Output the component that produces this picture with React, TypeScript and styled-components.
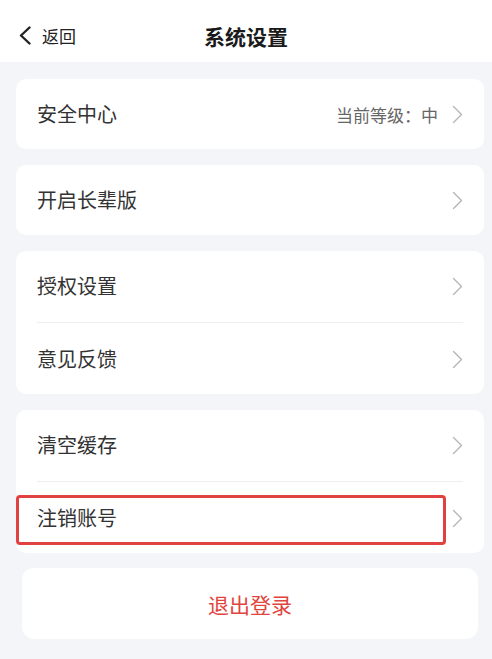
import styled, { createGlobalStyle } from 'styled-components';

const GlobalStyle = createGlobalStyle`
  html, body {
    margin: 0;
    padding: 0;
    background: #f4f5f9;
    font-family: "Noto Sans CJK SC", "Noto Sans", sans-serif;
  }
`;

const Chevron = () => (
  <svg width="11" height="19" viewBox="0 0 11 19" fill="none">
    <path d="M1.5 1.5 L9.5 9.5 L1.5 17.5" stroke="#b3b3b3" strokeWidth="1.3" strokeLinecap="round" strokeLinejoin="round" />
  </svg>
);

const BackIcon = () => (
  <svg width="15" height="19" viewBox="0 0 15 19" fill="none">
    <path d="M11.5 1.5 L3 9.5 L11.5 17.5" stroke="#222" strokeWidth="2.4" strokeLinecap="round" strokeLinejoin="round" />
  </svg>
);

export default function App() {
  return (
    <>
      <GlobalStyle />
      <Page>
        <Header>
          <Back>
            <BackIcon />
            <span>返回</span>
          </Back>
          <Title>系统设置</Title>
        </Header>
        <Content>
          <Card>
            <Row>
              <Label>安全中心</Label>
              <Right>
                <Extra>当前等级：中</Extra>
                <Chevron />
              </Right>
            </Row>
          </Card>
          <Card>
            <Row>
              <Label>开启长辈版</Label>
              <Chevron />
            </Row>
          </Card>
          <Card>
            <Row>
              <Label>授权设置</Label>
              <Chevron />
            </Row>
            <Divider />
            <Row>
              <Label>意见反馈</Label>
              <Chevron />
            </Row>
          </Card>
          <Card>
            <Row>
              <Label>清空缓存</Label>
              <Chevron />
            </Row>
            <Divider />
            <Row>
              <Label>注销账号</Label>
              <Chevron />
              <Highlight />
            </Row>
          </Card>
          <LogoutButton>退出登录</LogoutButton>
        </Content>
      </Page>
    </>
  );
}

const Page = styled.div`
  min-height: 659px;
  background: #f4f5f9;
`;

const Header = styled.div`
  height: 62px;
  background: #fff;
  position: relative;
  display: flex;
  align-items: center;
  justify-content: center;
`;

const Back = styled.div`
  position: absolute;
  left: 18px;
  top: 26px;
  display: flex;
  align-items: center;
  gap: 9px;
  font-size: 17px;
  color: #222;
  line-height: 19px;
`;

const Title = styled.div`
  font-size: 21px;
  font-weight: 700;
  color: #1a1a1a;
  margin-top: 10px;
`;

const Content = styled.div`
  padding: 17px 8px 20px 16px;
  display: flex;
  flex-direction: column;
  gap: 16px;
`;

const Card = styled.div`
  background: #fff;
  border-radius: 10px;
  padding: 0 21px;
`;

const Row = styled.div`
  position: relative;
  height: 70px;
  display: flex;
  align-items: center;
  justify-content: space-between;
`;

const Label = styled.span`
  font-size: 20px;
  color: #333;
  margin-top: -2px;
`;

const Right = styled.div`
  display: flex;
  align-items: center;
  gap: 14px;
`;

const Extra = styled.span`
  font-size: 17px;
  color: #666;
`;

const Divider = styled.div`
  height: 1px;
  margin: 1px 0;
  background: #eeeeee;
`;

const Highlight = styled.div`
  position: absolute;
  left: -21px;
  top: 12px;
  width: 430px;
  height: 50px;
  box-sizing: border-box;
  border: 3px solid #e04141;
  border-radius: 4px;
  pointer-events: none;
`;

const LogoutButton = styled.div`
  margin: -1px 6px 0 6px;
  height: 71px;
  background: #fff;
  border-radius: 12px;
  display: flex;
  align-items: center;
  justify-content: center;
  font-size: 21px;
  color: #e0443e;
`;
